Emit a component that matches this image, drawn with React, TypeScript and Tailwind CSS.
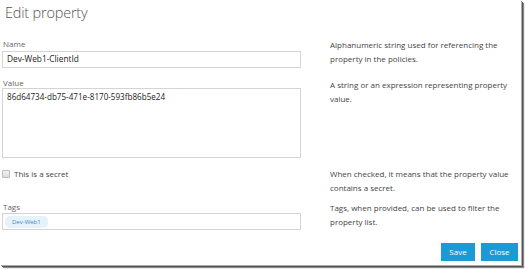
import React from "react";

const font = { fontFamily: '"Open Sans", "Noto Sans", sans-serif' };

export default function App() {
  return (
    <div className="w-[525px] h-[269px] bg-white" style={font}>
      <div className="w-[521px] h-[265px] bg-white shadow-[1px_1px_0_#aaa,2px_2px_0_#555,3px_3px_1px_#888] flex flex-col pl-[2px] pr-[3px]">
        <div className="pl-[3px] pt-[3px] text-[14.5px] leading-[20px] font-light text-[#555] tracking-[-0.2px]">Edit property</div>

        <div className="grid grid-cols-[299px_1fr] gap-x-[29px] mt-[15px]">
          {/* Name */}
          <div className="flex flex-col">
            <div className="h-[13px] text-[8px] leading-[12px] text-[#666] pl-[1px]">Name</div>
            <div className="h-[17px] border border-[#d4d4d4] flex items-center px-[4px] text-[8.3px] text-[#222]">Dev-Web1-ClientId</div>
          </div>
          <div className="text-[8px] leading-[14px] text-[#444] pr-[2px]">
            Alphanumeric string used for referencing the property in the policies.
          </div>

          {/* Value */}
          <div className="flex flex-col mt-[10px]">
            <div className="h-[10px] text-[8px] leading-[10px] text-[#666] pl-[1px]">Value</div>
            <div className="h-[70px] border border-[#d4d4d4] px-[4px] pt-[2px] text-[8.1px] leading-[12px] text-[#222]">86d64734-db75-471e-8170-593fb86b5e24</div>
          </div>
          <div className="mt-[10px] text-[8px] leading-[14px] text-[#444] pr-[2px]">
            A string or an expression representing property value.
          </div>

          {/* Secret */}
          <div className="flex items-start mt-[9px]">
            <div className="flex items-center h-[14px] gap-[4px] text-[8px] text-[#444]">
              <span className="w-[8px] h-[8px] border border-[#bbb] rounded-[1px] bg-gradient-to-b from-[#f4f4f4] to-[#dcdcdc]" />
              <span>This is a secret</span>
            </div>
          </div>
          <div className="mt-[9px] text-[8px] leading-[14px] text-[#444] pr-[2px]">
            When checked, it means that the property value contains a secret.
          </div>

          {/* Tags */}
          <div className="flex flex-col mt-[6px]">
            <div className="h-[12px] text-[8px] leading-[12px] text-[#666] pl-[1px]">Tags</div>
            <div className="h-[17px] border border-[#d4d4d4] flex items-center px-[2px]">
              <span className="h-[12px] px-[7px] rounded-[5px] bg-[#e6f2f9] text-[#3b8dc3] text-[6px] leading-[12px]">Dev-Web1</span>
            </div>
          </div>
          <div className="mt-[6px] text-[8px] leading-[14px] text-[#444] pr-[2px]">
            Tags, when provided, can be used to filter the property list.
          </div>
        </div>

        <div className="flex justify-end gap-[6px] mt-[13px]">
          <button className="w-[34px] h-[18px] bg-[#1a9bd6] text-white text-[8px] leading-[18px]">Save</button>
          <button className="w-[37px] h-[18px] bg-[#1a9bd6] text-white text-[8px] leading-[18px]">Close</button>
        </div>
      </div>
    </div>
  );
}
